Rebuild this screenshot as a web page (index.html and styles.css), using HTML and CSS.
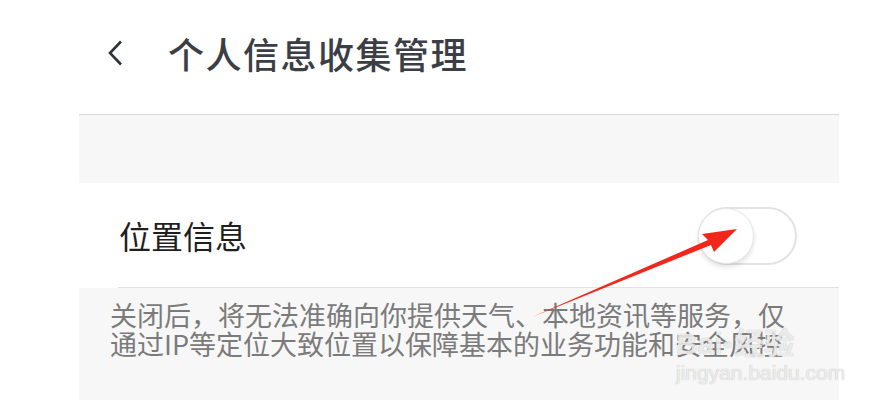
FILE: index.html
```html
<!DOCTYPE html>
<html lang="zh-CN">
<head>
    <meta charset="UTF-8">
    <meta name="viewport" content="width=device-width, initial-scale=1.0">
    <title>个人信息收集管理</title>
    <link rel="stylesheet" href="styles.css">
</head>
<body>
    <header class="topbar">
        <a class="back" href="#">
            <svg width="18" height="26" viewBox="0 0 18 26">
                <path d="M15 1.5 L4 13 L15 24.5" fill="none" stroke="#2f3238" stroke-width="2.6" stroke-linejoin="miter"/>
            </svg>
        </a>
        <h1>个人信息收集管理</h1>
    </header>

    <section class="panel">
        <div class="spacer"></div>
        <div class="row">
            <span class="label">位置信息</span>
            <span class="toggle"><span class="knob"></span></span>
        </div>
        <p class="note">关闭后，将无法准确向你提供天气、本地资讯等服务，仅<br>通过IP等定位大致位置以保障基本的业务功能和安全风控</p>
    </section>

    <!-- 标注箭头 -->
    <svg class="arrow" width="882" height="402" viewBox="0 0 882 402">
        <path d="M532 317 L708 240 L702 234 L737 229 L714 252 L711 245 Z" fill="#f2261b"/>
    </svg>

    <div class="watermark">
        <div class="wm-logo">Bai<span class="paw">&#9679;</span>经验</div>
        <div class="wm-url">jingyan.baidu.com</div>
    </div>
</body>
</html>
```

FILE: styles.css
```css
* {
    margin: 0;
    padding: 0;
    box-sizing: border-box;
}
body {
    font-family: "Noto Sans CJK SC", "Noto Sans", sans-serif;
    background-color: #ffffff;
    width: 882px;
    height: 402px;
    overflow: hidden;
    position: relative;
}
.topbar {
    height: 114px;
    display: flex;
    align-items: center;
    padding-left: 106px;
    padding-bottom: 8px;
}
.back {
    display: flex;
    width: 18px;
    height: 26px;
    margin-right: 44px;
}
.topbar h1 {
    font-size: 36px;
    font-weight: 500;
    color: #3b3e45;
    letter-spacing: 1.5px;
}
.panel {
    margin-left: 79px;
    width: 760px;
}
.spacer {
    height: 69px;
    background-color: #f7f7f7;
    border-top: 1px solid #d8d8d8;
}
.row {
    height: 105px;
    background-color: #ffffff;
    display: flex;
    align-items: center;
    justify-content: space-between;
    padding: 0 42px 0 40px;
    position: relative;
}
.row::after {
    content: "";
    position: absolute;
    left: 39px;
    right: 0;
    bottom: 0;
    height: 1px;
    background-color: #e2e2e2;
}
.label {
    font-size: 32px;
    color: #1f1f1f;
    margin-top: -2px;
}
.toggle {
    width: 99px;
    height: 58px;
    border: 2px solid #e3e3e3;
    border-radius: 29px;
    background-color: #ffffff;
    display: flex;
    align-items: center;
}
.knob {
    width: 56px;
    height: 56px;
    margin-left: -2px;
    border-radius: 50%;
    background-color: #ffffff;
    border: 1px solid #e6e6e6;
    box-shadow: 0 3px 5px rgba(0, 0, 0, 0.12);
}
.note {
    background-color: #f7f7f7;
    height: 112px;
    padding: 12px 0 0 31px;
    font-size: 27px;
    line-height: 29px;
    color: #7b7b7b;
}
.arrow {
    position: absolute;
    left: 0;
    top: 0;
    pointer-events: none;
}
.watermark {
    position: absolute;
    left: 676px;
    top: 328px;
    color: rgba(255, 255, 255, 0.75);
    text-shadow: 0 0 1px rgba(120, 120, 120, 0.6);
    font-family: "Liberation Sans", sans-serif;
    pointer-events: none;
}
.wm-logo {
    font-size: 30px;
    line-height: 32px;
    font-weight: bold;
    font-family: "Liberation Sans", "Noto Sans CJK SC", sans-serif;
}
.paw {
    font-size: 16px;
    vertical-align: top;
    margin-right: 2px;
}
.wm-url {
    font-size: 21px;
    line-height: 26px;
}
```
